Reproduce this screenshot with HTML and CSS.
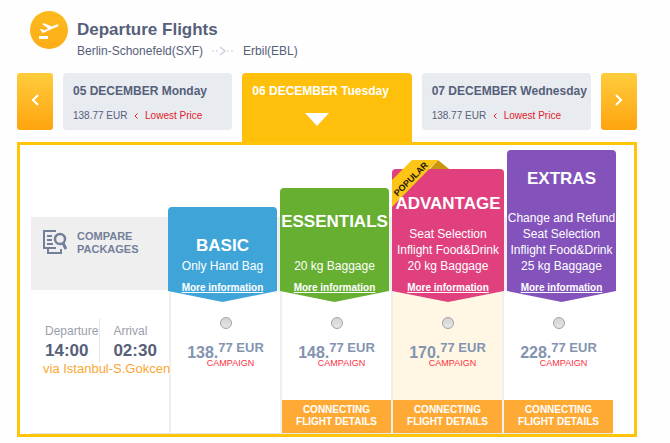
FILE: index.html
```html
<!DOCTYPE html>
<html lang="en">
<head>
    <meta charset="UTF-8">
    <meta name="viewport" content="width=device-width, initial-scale=1.0">
    <title>Departure Flights</title>
    <link rel="stylesheet" href="styles.css">
</head>
<body>
    <main class="container">
        <header class="route">
            <svg class="route-icon" viewBox="0 0 38 38" aria-hidden="true">
                <defs>
                    <linearGradient id="sun" x1="0" y1="0" x2="0" y2="1">
                        <stop offset="0" stop-color="#fdbb1c"/>
                        <stop offset="1" stop-color="#fcac18"/>
                    </linearGradient>
                </defs>
                <circle cx="19" cy="19" r="19" fill="url(#sun)"/>
                <path d="M9 25h9v3H9z" fill="#fff"/>
                <path d="M10 18l2 0 2.200 1.200 4-1.700-6.200-4.500 2-.8 8 3.400 4.500-2c1-.4 1.800-.2 2 .3.200.6-.2 1.200-1 1.600L14 21.600c-1 .4-1.700.200-2.200-.6z" fill="#fff"/>
            </svg>
            <div>
                <h1>Departure Flights</h1>
                <p class="route-line">
                    <span>Berlin-Schonefeld(SXF)</span>
                    <svg class="route-arrow" viewBox="0 0 22 10" aria-hidden="true">
                        <path d="M0 5h2M4 5h2M15 5h2M19 5h2" stroke="#c9d0e2"/>
                        <path d="M8 1l5 4-5 4" fill="none" stroke="#c9d0e2" stroke-width="1.500"/>
                    </svg>
                    <span>Erbil(EBL)</span>
                </p>
            </div>
        </header>

        <nav class="days">
            <button class="arrow" type="button" aria-label="Previous day">
                <svg viewBox="0 0 8 12"><path d="M7 1L2 6l5 5"/></svg>
            </button>
            <button class="day" type="button">
                <span class="date">05 DECEMBER Monday</span>
                <span class="from">138.77 EUR <svg viewBox="0 0 4 6"><path d="M3.500.5L1 3l2.500 2.500"/></svg> <em>Lowest Price</em></span>
            </button>
            <button class="day active" type="button">
                <span class="date">06 DECEMBER Tuesday</span>
                <svg class="pointer" viewBox="0 0 24 13"><path d="M0 0h24L12 13z"/></svg>
            </button>
            <button class="day" type="button">
                <span class="date">07 DECEMBER Wednesday</span>
                <span class="from">138.77 EUR <svg viewBox="0 0 4 6"><path d="M3.500.5L1 3l2.500 2.500"/></svg> <em>Lowest Price</em></span>
            </button>
            <button class="arrow" type="button" aria-label="Next day">
                <svg viewBox="0 0 8 12"><path d="M1 1l5 5-5 5"/></svg>
            </button>
        </nav>

        <section class="fares">
            <div class="packages">
                <a class="compare" href="#">
                    <svg viewBox="0 0 24 24" aria-hidden="true">
                        <path d="M13 1H1v17h12M4 6h5M4 10h5M4 14h6" stroke-width="2"/>
                        <path d="M5 18v5h13v-4" stroke-width="2"/>
                        <circle cx="17" cy="9" r="5" stroke-width="2.500"/>
                        <path d="M20 13l3 6" stroke-width="3"/>
                    </svg>
                    <span>COMPARE PACKAGES</span>
                </a>
                <article class="package basic">
                    <h2>BASIC</h2>
                    <ul>
                        <li>Only Hand Bag</li>
                    </ul>
                    <a href="#">More information</a>
                </article>
                <article class="package essentials">
                    <h2>ESSENTIALS</h2>
                    <ul>
                        <li>20 kg Baggage</li>
                    </ul>
                    <a href="#">More information</a>
                </article>
                <article class="package advantage">
                    <svg class="ribbon" viewBox="0 0 58 48">
                        <path d="M46 0l11 9H38z" fill="#c9970c"/>
                        <path d="M0 20L20 0h26L0 47z" fill="#fdc516"/>
                        <text x="19" y="19" transform="rotate(-45 19 19)">POPULAR</text>
                    </svg>
                    <h2>ADVANTAGE</h2>
                    <ul>
                        <li>Seat Selection</li>
                        <li>Inflight Food&amp;Drink</li>
                        <li>20 kg Baggage</li>
                    </ul>
                    <a href="#">More information</a>
                </article>
                <article class="package extras">
                    <h2>EXTRAS</h2>
                    <ul>
                        <li>Change and Refund</li>
                        <li>Seat Selection</li>
                        <li>Inflight Food&amp;Drink</li>
                        <li>25 kg Baggage</li>
                    </ul>
                    <a href="#">More information</a>
                </article>
            </div>

            <div class="flight">
                <div class="schedule">
                    <dl>
                        <div>
                            <dt>Departure</dt>
                            <dd>14:00</dd>
                        </div>
                        <div>
                            <dt>Arrival</dt>
                            <dd>02:30</dd>
                        </div>
                    </dl>
                    <p class="via">via Istanbul-S.Gokcen</p>
                </div>
                <div class="fare">
                    <input type="radio" name="fare" id="fare-basic">
                    <label for="fare-basic"><b>138.</b><sup>77 EUR</sup><span>CAMPAIGN</span></label>
                </div>
                <div class="fare">
                    <input type="radio" name="fare" id="fare-essentials">
                    <label for="fare-essentials"><b>148.</b><sup>77 EUR</sup><span>CAMPAIGN</span></label>
                    <button type="button">CONNECTING FLIGHT DETAILS</button>
                </div>
                <div class="fare popular">
                    <input type="radio" name="fare" id="fare-advantage">
                    <label for="fare-advantage"><b>170.</b><sup>77 EUR</sup><span>CAMPAIGN</span></label>
                    <button type="button">CONNECTING FLIGHT DETAILS</button>
                </div>
                <div class="fare">
                    <input type="radio" name="fare" id="fare-extras">
                    <label for="fare-extras"><b>228.</b><sup>77 EUR</sup><span>CAMPAIGN</span></label>
                    <button type="button">CONNECTING FLIGHT DETAILS</button>
                </div>
            </div>
        </section>
    </main>
</body>
</html>
```
FILE: styles.css
```css
* {
    box-sizing: border-box;
}
body {
    margin: 0;
    font-family: "Liberation Sans", Arial, sans-serif;
    font-size: 12px;
    color: #566079;
    background-color: #fefefe;
}
h1, h2, p, ul, dl, dd {
    margin: 0;
    padding: 0;
}
button {
    font-family: inherit;
    border: none;
    cursor: pointer;
}
.container {
    padding: 11px 33px 0 17px;
}

/* route header */
.route {
    display: flex;
    gap: 9px;
    padding-left: 13px;
    height: 62px;
}
.route-icon {
    width: 38px;
    height: 38px;
}
h1 {
    margin-top: 7px;
    font-size: 17px;
    line-height: 24px;
}
.route-line {
    display: flex;
    align-items: center;
    gap: 9px;
    line-height: 18px;
    font-size: 12px;
}
.route-arrow {
    width: 22px;
    height: 10px;
}

/* day tabs */
.days {
    display: flex;
    align-items: flex-start;
    gap: 10px;
}
.arrow {
    flex: 0 0 36px;
    height: 57px;
    padding: 0;
    border-radius: 3px;
    background: linear-gradient(#ffcc3c, #ffa40f);
}
.arrow svg {
    width: 8px;
    height: 12px;
    fill: none;
    stroke: #fff;
    stroke-width: 2;
}
.day {
    flex: 1 1 0;
    min-width: 0;
    height: 57px;
    padding: 9px 0 0 10px;
    display: flex;
    flex-direction: column;
    gap: 8px;
    border-radius: 4px;
    background-color: #e8ebf0;
    color: #566079;
    text-align: left;
    white-space: nowrap;
}
.date {
    font-size: 12px;
    font-weight: bold;
    line-height: 18px;
}
.from {
    font-size: 10px;
    line-height: 16px;
}
.from svg {
    width: 4px;
    height: 6px;
    margin: 0 4px;
    fill: none;
    stroke: #e31b2c;
}
.from em {
    font-style: normal;
    color: #e31b2c;
}
.active {
    height: 69px;
    border-radius: 4px 4px 0 0;
    background-color: #ffc00b;
    color: #fff;
}
.pointer {
    width: 24px;
    height: 13px;
    margin: 5px 0 0 53px;
    fill: #fff;
}

/* fare table */
.fares {
    padding: 5px 18px 0 11px;
    border: 3px solid #ffc50b;
    background-color: #fff;
}
.packages {
    display: grid;
    grid-template-columns: 137fr 112fr 112fr 115fr 109fr;
    align-items: end;
    background: linear-gradient(#efefef, #efefef) bottom / 100% 73px no-repeat;
}
.compare {
    display: flex;
    gap: 10px;
    height: 73px;
    padding: 13px 20px 0 12px;
    color: #74809a;
    font-size: 11px;
    font-weight: bold;
    line-height: 13px;
    text-decoration: none;
}
.compare svg {
    flex: none;
    width: 24px;
    height: 24px;
    fill: none;
    stroke: #74809a;
}
.package {
    position: relative;
    z-index: 1;
    display: flex;
    flex-direction: column;
    align-items: center;
    margin: 0 3px -12px 0;
    padding-bottom: 8px;
    color: #fff;
    white-space: nowrap;
}
.package::before {
    content: "";
    position: absolute;
    inset: 0;
    z-index: -1;
    border-radius: 4px 4px 0 0;
    background-color: var(--tone);
    clip-path: polygon(0 0, 100% 0, 100% calc(100% - 11px), 50% 100%, 0 calc(100% - 11px));
}
.package h2 {
    font-size: 17px;
    line-height: 20px;
    z-index: 1;
}
.package ul {
    list-style: none;
    font-size: 12px;
    line-height: 16px;
    text-align: center;
}
.package a {
    margin-top: 8px;
    color: #fff;
    font-size: 10px;
    font-weight: bold;
    line-height: 12px;
}
.basic {
    --tone: #3fa5d9;
    padding-top: 29px;
}
.basic h2 {
    margin-bottom: 2px;
}
.essentials {
    --tone: #66af31;
    padding-top: 24px;
}
.essentials h2 {
    margin-bottom: 26px;
}
.advantage {
    --tone: #e0417e;
    padding-top: 25px;
}
.advantage h2 {
    margin-bottom: 12px;
}
.extras {
    --tone: #8353bb;
    margin-right: 0;
    padding-top: 19px;
}
.extras h2 {
    margin-bottom: 21px;
}
.ribbon {
    position: absolute;
    top: -9px;
    left: 0;
    width: 58px;
    height: 48px;
}
.ribbon text {
    fill: #1d1806;
    font-size: 9px;
    font-weight: bold;
    text-anchor: middle;
    dominant-baseline: central;
}

.flight {
    display: grid;
    grid-template-columns: 138fr 111fr 111fr 111fr 111fr;
    margin-right: 3px;
    border-bottom: 1px solid #e6e6e6;
}
.schedule {
    z-index: 1;
    min-width: 0;
    padding: 29px 0 0 12px;
}
.schedule dl {
    display: flex;
}
.schedule dl div {
    height: 43px;
    padding: 3px 0 0 2px;
}
.schedule dl div + div {
    margin-left: 1px;
    padding-left: 13px;
    border-left: 1px solid #e2e2e2;
}
.schedule dt {
    color: #9a9eaa;
    font-size: 12px;
    line-height: 18px;
}
.schedule dd {
    font-size: 17px;
    font-weight: bold;
    line-height: 22px;
}
.via {
    color: #fba733;
    font-size: 13px;
    line-height: 14px;
    white-space: nowrap;
}
.fare {
    display: flex;
    flex-direction: column;
    align-items: center;
    min-height: 143px;
    padding-top: 27px;
    border-left: 2px solid #efefef;
}
.popular {
    background-color: #fff7e4;
}
.fare input {
    appearance: none;
    width: 12px;
    height: 12px;
    margin: 0;
    border: 1px solid #a2a2a2;
    border-radius: 50%;
    background: linear-gradient(#d4d4d4, #e6e6e6);
}
.fare label {
    margin-top: 12px;
    color: #8494b0;
    font-size: 16px;
    font-weight: bold;
    line-height: 20px;
    white-space: nowrap;
}
.fare sup {
    font-size: 13px;
    line-height: 13px;
    vertical-align: 6px;
}
.fare label span {
    display: block;
    margin-top: -5px;
    padding-left: 10px;
    color: #fb3343;
    font-size: 9px;
    font-weight: normal;
    line-height: 10px;
    text-align: center;
}
.fare button {
    align-self: stretch;
    margin-top: auto;
    padding: 4px 10px 5px;
    background-color: #ffaa35;
    color: #fff;
    font-size: 10px;
    font-weight: bold;
    line-height: 12px;
}
```
